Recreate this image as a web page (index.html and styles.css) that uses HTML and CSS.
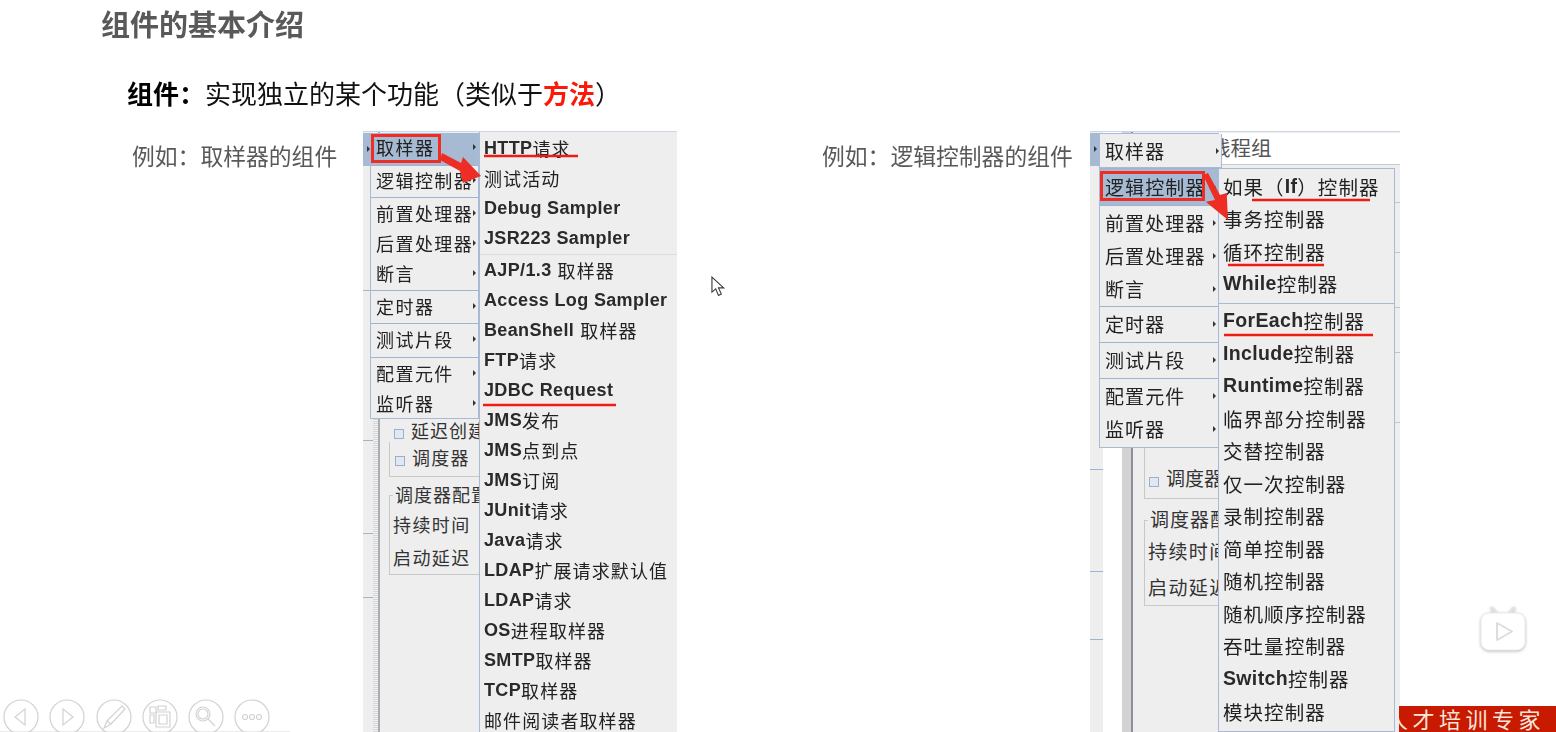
FILE: index.html
```html
<!DOCTYPE html>
<html lang="zh">
<head>
<meta charset="utf-8">
<title>组件的基本介绍</title>
<link rel="stylesheet" href="styles.css">
</head>
<body>
<main class="slide">
  <h1 class="title">组件的基本介绍</h1>
  <p class="lead"><strong>组件：</strong>实现独立的某个功能（类似于<strong class="hot">方法</strong>）</p>
  <section class="examples">
    <p class="label label-a">例如：取样器的组件</p>
    <div class="shot shot-a">
      <i class="gutter"></i><i class="ribbon"></i><i class="rail"></i>
      <i class="hl hl1"></i><i class="hl hl2"></i><i class="hl hl3"></i><i class="hl hl4"></i><i class="hl hl5"></i>
      <i class="tab"></i>
      <div class="form form-a">
        <div class="box box-a1"><span class="check"></span>延迟创建</div>
        <div class="box box-a2"><span class="check"></span>调度器</div>
        <div class="box box-a3"><span class="legend">调度器配置</span><div class="fline">持续时间</div><div class="fline">启动延迟</div></div>
      </div>
      <nav class="menu menu-a">
        <div class="grp g1 sel"><div class="row">取样器</div></div>
        <div class="grp g2"><div class="row">逻辑控制器</div></div>
        <div class="grp g3"><div class="row">前置处理器</div><div class="row">后置处理器</div><div class="row">断言</div></div>
        <div class="grp g4"><div class="row">定时器</div></div>
        <div class="grp g5"><div class="row">测试片段</div></div>
        <div class="grp g6"><div class="row">配置元件</div><div class="row">监听器</div></div>
      </nav>
      <nav class="sub sub-a">
        <div class="sgrp">
          <div class="item"><b>HTTP</b>请求</div><div class="item">测试活动</div><div class="item"><b>Debug Sampler</b></div><div class="item"><b>JSR223 Sampler</b></div>
        </div>
        <div class="sgrp sgrp2">
          <div class="item"><b>AJP/1.3</b> 取样器</div><div class="item"><b>Access Log Sampler</b></div><div class="item"><b>BeanShell</b> 取样器</div><div class="item"><b>FTP</b>请求</div><div class="item"><b>JDBC Request</b></div><div class="item"><b>JMS</b>发布</div><div class="item"><b>JMS</b>点到点</div><div class="item"><b>JMS</b>订阅</div><div class="item"><b>JUnit</b>请求</div><div class="item"><b>Java</b>请求</div><div class="item"><b>LDAP</b>扩展请求默认值</div><div class="item"><b>LDAP</b>请求</div><div class="item"><b>OS</b>进程取样器</div><div class="item"><b>SMTP</b>取样器</div><div class="item"><b>TCP</b>取样器</div><div class="item">邮件阅读者取样器</div>
        </div>
      </nav>
      <svg class="marks" viewBox="0 0 314 601" aria-hidden="true">
        <rect class="rb" x="9.5" y="4.5" width="67" height="26"/>
        <path class="ul" d="M121 25H215M120 274H253"/>
        <path class="ar" d="M79 22L98 32L100 26L118 45L100 52L97 40L77 29Z"/>
      </svg>
    </div>
    <p class="label label-b">例如：逻辑控制器的组件</p>
    <div class="shot shot-b">
      <i class="gutter"></i><i class="ribbon"></i><i class="rail"></i>
      <i class="hl hl6"></i><i class="hl hl7"></i><i class="hl hl8"></i>
      <i class="tab"></i>
      <div class="namebar">线程组</div>
      <i class="rline r1"></i><i class="rline r2"></i><i class="rline r3"></i><i class="rline r4"></i><i class="rline r5"></i>
      <div class="form form-b">
        <div class="box box-b1"></div>
        <div class="box box-b2"><span class="check"></span>调度器</div>
        <div class="box box-b3"><span class="legend">调度器配置</span><div class="fline">持续时间</div><div class="fline">启动延迟</div></div>
      </div>
      <nav class="menu menu-b">
        <div class="grp g1"><div class="row">取样器</div></div>
        <div class="grp g2 sel"><div class="row">逻辑控制器</div></div>
        <div class="grp g3"><div class="row">前置处理器</div><div class="row">后置处理器</div><div class="row">断言</div></div>
        <div class="grp g4"><div class="row">定时器</div></div>
        <div class="grp g5"><div class="row">测试片段</div></div>
        <div class="grp g6"><div class="row">配置元件</div><div class="row">监听器</div></div>
      </nav>
      <nav class="sub sub-b">
        <div class="sgrp">
          <div class="item">如果（<b>If</b>）控制器</div><div class="item">事务控制器</div><div class="item">循环控制器</div><div class="item"><b>While</b>控制器</div>
        </div>
        <div class="sgrp sgrp2">
          <div class="item"><b>ForEach</b>控制器</div><div class="item"><b>Include</b>控制器</div><div class="item"><b>Runtime</b>控制器</div><div class="item">临界部分控制器</div><div class="item">交替控制器</div><div class="item">仅一次控制器</div><div class="item">录制控制器</div><div class="item">简单控制器</div><div class="item">随机控制器</div><div class="item">随机顺序控制器</div><div class="item">吞吐量控制器</div><div class="item"><b>Switch</b>控制器</div><div class="item">模块控制器</div>
        </div>
      </nav>
      <svg class="marks" viewBox="0 0 310 601" aria-hidden="true">
        <rect class="rb" x="11.5" y="41.5" width="102" height="27"/>
        <path class="ul" d="M162 69H280M138 134H234M134 204H283"/>
        <path class="ar" d="M113 44L118 42L130 64L136.7 62L138 89L115.7 70.7L125 69Z"/>
      </svg>
    </div>
  </section>

  <div class="banner"><span>人才培训专家</span></div>

  <svg class="cursor" viewBox="0 0 16 22" aria-hidden="true">
    <path d="M1 1V17L5 13.5L8 20.5L11 19L8 12.5H13.5Z"/>
  </svg>

  <svg class="play" viewBox="0 0 48 44" aria-hidden="true">
    <path class="play-ears" d="M18 7L13 1M30 7L35 1"/>
    <rect class="play-body" x="2" y="6" width="44" height="37" rx="8"/>
    <path class="play-tri" d="M18 16V33L33 24.5Z"/>
  </svg>

  <div class="controls" aria-hidden="true">
    <svg class="ctl" viewBox="0 0 36 36"><circle cx="18" cy="18" r="17"/><path d="M22 10V26L12 18Z"/></svg>
    <svg class="ctl" viewBox="0 0 36 36"><circle cx="18" cy="18" r="17"/><path d="M14 10V26L24 18Z"/></svg>
    <svg class="ctl" viewBox="0 0 36 36"><circle cx="18" cy="18" r="17"/><path d="M26 7L29 10L15 25L11 22ZM11 22L15 25L8 29Z"/></svg>
    <svg class="ctl" viewBox="0 0 36 36"><circle cx="18" cy="18" r="17"/><path d="M8 8H14V14H8ZM8 16H12V24H8ZM16 7H24V11H16ZM14 13H28V28H14ZM17 16H25V25H17Z"/></svg>
    <svg class="ctl" viewBox="0 0 36 36"><circle cx="18" cy="18" r="17"/><circle cx="15" cy="15" r="7"/><circle cx="15" cy="15" r="5"/><path d="M20 20L27 27"/></svg>
    <svg class="ctl" viewBox="0 0 36 36"><circle cx="18" cy="18" r="17"/><circle cx="11" cy="18" r="2.5"/><circle cx="18" cy="18" r="2.5"/><circle cx="25" cy="18" r="2.5"/></svg>
  </div>
</main>
</body>
</html>
```
FILE: styles.css
```css
* { box-sizing: border-box; }
html, body { margin: 0; padding: 0; background: #fff; }
body { font-family: "Liberation Sans", "Noto Sans CJK SC", sans-serif; }

.slide { position: relative; width: 1556px; height: 732px; overflow: hidden; background: #fff; }

.title { margin: 0; padding: 5px 0 0 101px; height: 65px; font-size: 29px; line-height: 42px; font-weight: 700; color: #595959; filter: blur(.3px); }
.lead { margin: 0; padding-left: 127px; height: 66px; font-size: 26px; line-height: 60px; color: #111; filter: blur(.3px); }
.lead strong { color: #000; }
.lead .hot { color: #fb1a0a; }

.examples { display: flex; align-items: flex-start; height: 601px; }
.label { margin: 0; padding-top: 9px; font-size: 22.8px; line-height: 34px; color: #595959; font-weight: 400; white-space: nowrap; filter: blur(.25px); }
.label-a { margin-left: 132px; width: 231px; }
.label-b { margin-left: 145px; width: 268px; }

.shot { position: relative; flex: none; height: 601px; overflow: hidden; background: #eee; border-top: 1px solid #cdd6e4; color: #222; }
.shot-a { width: 314px; }
.shot-b { width: 310px; }
.shot i { display: block; position: absolute; }

.gutter { left: 0; top: 0; bottom: 0; width: 10px; background: #eee; }
.ribbon { left: 10px; top: 0; bottom: 0; width: 6px; background: repeating-linear-gradient(0deg, #d6d6d6 0 1px, #f2f2f2 1px 2px); }
.rail { left: 15px; top: 0; bottom: 0; width: 2px; background: #a9acb2; }
.hl { left: 0; width: 10px; height: 1px; background: #9eb4d6; }
.hl1 { top: 33px; } .hl2 { top: 158px; } .hl3 { top: 308px; } .hl4 { top: 401px; } .hl5 { top: 465px; }
.tab { left: 0; top: 1px; width: 9px; height: 33px; background: #a6bad3; }
.tab::after { content: ""; position: absolute; left: 4px; top: 13px; border-left: 3px solid #333; border-top: 3px solid transparent; border-bottom: 3px solid transparent; }

.shot-b .gutter { width: 13px; }
.shot-b .ribbon { left: 13px; width: 19px; background: #fff; }
.shot-b .rail { left: 32px; width: 11px; background: linear-gradient(90deg, #d3d3d3 0 9px, #8d9097 9px); }
.hl6 { top: 337px; width: 13px; } .hl7 { top: 439px; width: 13px; } .hl8 { top: 507px; width: 13px; }

.namebar { position: absolute; left: 110px; top: 1px; width: 200px; height: 32px; padding-left: 10px; background: #fff; border-bottom: 1px solid #c9c9c9; font-size: 20.5px; line-height: 31px; color: #555; }
.rline { left: 305px; width: 5px; height: 1px; background: #b9c7de; }
.r1 { top: 70px; } .r2 { top: 120px; } .r3 { top: 175px; } .r4 { top: 220px; } .r5 { top: 290px; }

.form { position: absolute; left: 0; top: 0; bottom: 0; overflow: hidden; font-size: 18px; color: #333; }
.form-a { width: 116px; }
.form-b { width: 128px; }
.box { position: absolute; border: 1px solid #c8c8c8; white-space: nowrap; overflow: hidden; }
.check { display: inline-block; width: 10px; height: 10px; margin-right: 7px; background: #dfe8f3; border: 1px solid #9fb0c6; vertical-align: -1px; }
.legend { position: absolute; left: 3px; top: -13px; padding: 0 2px; background: #eee; line-height: 26px; letter-spacing: 1px; }
.fline { height: 33px; line-height: 33px; padding-left: 3px; letter-spacing: 1.4px; }

.box-a1 { left: 26px; top: 278px; width: 90px; height: 32px; padding: 10px 0 0 5px; border: 0; line-height: 24px; letter-spacing: 1px; }
.box-a2 { left: 26px; top: 310px; width: 200px; height: 35px; padding: 2px 0 0 5px; line-height: 30px; letter-spacing: 1.2px; border-width: 0 0 1px 1px; }
.box-a3 { left: 26px; top: 363px; width: 200px; height: 80px; padding-top: 14px; border-right: 0; overflow: visible; }

.box-b1 { left: 54px; top: 280px; width: 200px; height: 87px; border-width: 0 0 1px 1px; }
.box-b2 { left: 54px; top: 330px; width: 200px; height: 37px; padding: 0 0 0 5px; line-height: 36px; font-size: 19px; border: 0; }
.box-b3 { left: 54px; top: 388px; width: 200px; height: 86px; padding-top: 14px; border-right: 0; overflow: visible; font-size: 19px; }
.box-b3 .fline { height: 36px; line-height: 36px; }

.menu, .sub { position: absolute; background: #eee; filter: blur(.3px); }
.grp { border-top: 1px solid #9fb3d3; }
.row { display: flex; align-items: center; position: relative; white-space: nowrap; padding-left: 5px; }
.row::after { content: ""; position: absolute; right: 2px; top: 50%; margin-top: -3px; border-left: 3px solid #333; border-top: 3px solid transparent; border-bottom: 3px solid transparent; }
.sel { background: #a6bad3; }

.menu-a { left: 7px; top: 1px; width: 109px; height: 286px; border: 1px solid #a8bad6; border-top: 0; font-size: 18px; letter-spacing: 1.45px; }
.menu-a .row { height: 30px; }
.menu-a .g1 { height: 32px; border-top: 0; }
.menu-a .g1 .row { height: 27px; }
.menu-a .g2 { height: 32px; }
.menu-a .g2 .row { height: 28px; }
.menu-a .g3 { padding-bottom: 2px; }
.menu-a .g4 { padding-bottom: 2px; }
.menu-a .g5 { padding-bottom: 3px; }

.menu-b { left: 9px; top: 1px; width: 120px; height: 315px; border: 1px solid #a8bad6; font-size: 19px; letter-spacing: 1.1px; }
.menu-b .row { height: 33px; }
.menu-b .g1 { width: 122px; height: 34px; background: #eee; border: 1px solid #a8bad6; border-width: 0 1px 1px 0; }
.menu-b .g2 { padding: 1px 0 2px; }
.menu-b .g3 { padding-bottom: 1px; }
.menu-b .g4, .menu-b .g5 { padding-bottom: 2px; }
.menu-b .g6 { padding-bottom: 1px; }

.sub-a { left: 116px; top: 0; width: 198px; height: 601px; border-left: 1px solid #a8bad6; padding-top: 1px; font-size: 18px; letter-spacing: 1.1px; }
.sub-a .item { height: 30px; }
.sub-a .sgrp2 { margin-top: 1px; border-top: 1px solid #dcdcdc; }
.sub-b { left: 128px; top: 36px; width: 177px; height: 564px; border: 1px solid #a8bad6; padding-top: 1px; font-size: 19.5px; letter-spacing: 1.05px; }
.sub-b .item { height: 32.55px; }
.sub-b .sgrp2 { margin-top: 3px; border-top: 1px solid #a8bad6; }
.item { display: flex; align-items: center; padding-left: 4px; white-space: pre; }
.item b { font-weight: 700; letter-spacing: .35px; color: #2a2a2a; }

.marks { position: absolute; left: 0; top: -1px; width: 100%; height: 601px; pointer-events: none; }
.ul { fill: none; stroke: #ee1c14; stroke-width: 2.5; }
.ar { fill: #ee2d24; }
.rb { fill: none; stroke: #ee2d24; stroke-width: 3; }

.banner { position: absolute; left: 1399px; top: 706px; width: 157px; height: 26px; overflow: hidden; background: #c81a00; color: #f7e6dc; }
.banner span { position: absolute; left: -13px; top: 0; font-size: 22px; line-height: 29px; letter-spacing: 4.5px; white-space: nowrap; }

.cursor { position: absolute; left: 711px; top: 276px; width: 15px; height: 21px; }
.cursor path { fill: #fff; stroke: #3b3b3b; stroke-width: 1.2; }

.play { position: absolute; left: 1479px; top: 607px; width: 48px; height: 44px; overflow: visible; filter: drop-shadow(0 1px 1.5px #bbb); }
.play-ears { fill: none; stroke: #e2e2e2; stroke-width: 3; stroke-linecap: round; }
.play-body { fill: #fff; stroke: #ececec; stroke-width: 1; }
.play-tri { fill: #fff; stroke: #ddd; stroke-width: 2; stroke-linejoin: round; }

.controls { position: absolute; left: 0; top: 699px; width: 290px; height: 33px; padding-left: 3px; display: flex; align-items: flex-start; gap: 10.3px; border-bottom: 1px solid #ececec; }
.ctl { width: 36px; height: 36px; flex: none; }
.ctl circle, .ctl path { fill: none; stroke: #d2d2d2; stroke-width: 1.2; }
```
